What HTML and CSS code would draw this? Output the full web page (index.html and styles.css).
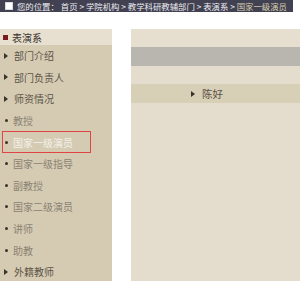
FILE: index.html
```html
<!DOCTYPE html>
<html lang="zh">
<head>
<meta charset="utf-8">
<link rel="stylesheet" href="styles.css">
</head>
<body>
<div class="crumb">
  <span class="crumb-icon"></span>
  <span class="crumb-text">您的位置： 首页 &gt; 学院机构 &gt; 教学科研教辅部门 &gt; 表演系 &gt; <span class="crumb-current">国家一级演员</span></span>
</div>
<div class="layout">
  <aside class="sidebar">
    <div class="side-head"><span class="head-mark"></span>表演系</div>
    <ul class="side-list">
      <li class="item main-item"><span class="tri"></span>部门介绍</li>
      <li class="item main-item"><span class="tri"></span>部门负责人</li>
      <li class="item main-item"><span class="tri"></span>师资情况</li>
      <li class="item sub-item"><span class="dot"></span>教授</li>
      <li class="item sub-item active"><span class="dot"></span>国家一级演员</li>
      <li class="item sub-item"><span class="dot"></span>国家一级指导</li>
      <li class="item sub-item"><span class="dot"></span>副教授</li>
      <li class="item sub-item"><span class="dot"></span>国家二级演员</li>
      <li class="item sub-item"><span class="dot"></span>讲师</li>
      <li class="item sub-item"><span class="dot"></span>助教</li>
      <li class="item main-item"><span class="tri"></span>外籍教师</li>
    </ul>
  </aside>
  <div class="gap"></div>
  <main class="content">
    <div class="band band-top"></div>
    <div class="band band-gray"></div>
    <div class="band band-light"></div>
    <div class="band band-name"><span class="tri dark"></span>陈好</div>
    <div class="band-rest"></div>
  </main>
</div>
</body>
</html>
```
FILE: styles.css
```css
html, body {
  margin: 0;
  padding: 0;
  background: #ffffff;
  font-family: "Noto Sans CJK SC", "Noto Sans", sans-serif;
}
.crumb {
  width: 293px;
  height: 12px;
  background: #414152;
  display: flex;
  align-items: center;
  gap: 4px;
  padding-left: 5px;
  box-sizing: border-box;
  overflow: hidden;
  white-space: nowrap;
}
.crumb-icon {
  width: 6px;
  height: 6px;
  background: #ffffff;
  border: 1px solid #d8d8e0;
  flex: none;
}
.crumb-text {
  font-size: 8.4px;
  line-height: 12px;
  color: #ececf0;
}
.crumb-current {
  color: #d9d0b0;
}
.layout {
  display: grid;
  grid-template-columns: 112px 19px 1fr;
  margin-top: 17px;
  height: 252px;
}
.sidebar {
  background: #d5cbb3;
}
.side-head {
  height: 16px;
  background: #e7e0d0;
  display: flex;
  align-items: center;
  font-size: 10px;
  color: #3b332b;
  padding-left: 3px;
}
.head-mark {
  width: 5px;
  height: 5px;
  background: #7a1c1c;
  margin-right: 4px;
}
.side-list {
  list-style: none;
  margin: 0;
  padding: 0;
}
.item {
  height: 21.6px;
  display: flex;
  align-items: center;
  font-size: 10px;
}
.main-item {
  color: #5d5448;
  padding-left: 4px;
}
.tri {
  width: 0;
  height: 0;
  border-left: 4px solid #3a3228;
  border-top: 3px solid transparent;
  border-bottom: 3px solid transparent;
  margin-right: 6px;
}
.sub-item {
  color: #8b8272;
  padding-left: 5px;
}
.dot {
  width: 3px;
  height: 3px;
  border-radius: 50%;
  background: #3a3228;
  margin-right: 5px;
}
.active {
  color: #f4f1ea;
  margin: 1px 22px 1px 3px;
  padding-left: 2px;
  outline: 1.5px solid #e04444;
  height: 19.6px;
}
.gap {
  background: #ffffff;
}
.content {
  background: #e4dccc;
  display: flex;
  flex-direction: column;
}
.band {
  height: 19px;
}
.band-top {
  height: 18px;
  background: #e6dfd0;
}
.band-gray {
  background: #b8b6ae;
}
.band-light {
  height: 18px;
  background: #e4dccc;
}
.band-name {
  background: #d8cfb7;
  display: flex;
  align-items: center;
  padding-left: 47px;
  font-size: 10.5px;
  color: #5a5046;
}
.tri.dark {
  margin-left: 13px;
  margin-right: 7px;
}
.band-rest {
  flex: 1;
}
```
